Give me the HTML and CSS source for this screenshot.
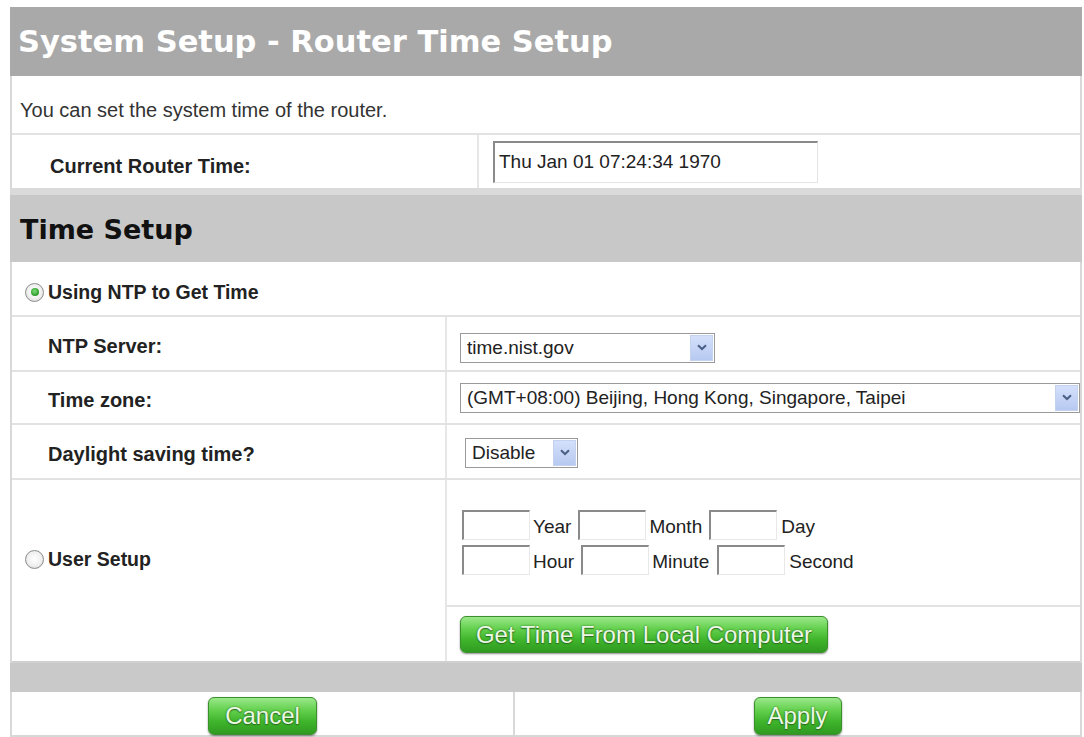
FILE: index.html
```html
<!DOCTYPE html>
<html>
<head>
<meta charset="utf-8">
<link rel="stylesheet" href="styles.css">
</head>
<body>
<div class="panel">
  <div class="title">System Setup - Router Time Setup</div>
  <div class="intro">You can set the system time of the router.</div>
  <div class="row current">
    <div class="cell label">Current Router Time:</div>
    <div class="cell value"><div class="textbox wide">Thu Jan 01 07:24:34 1970</div></div>
  </div>
  <div class="section">Time Setup</div>
  <div class="radio-row">
    <span class="radio checked"><span class="dot"></span></span>
    <span class="radio-label">Using NTP to Get Time</span>
  </div>
  <div class="row form r-ntp">
    <div class="cell label">NTP Server:</div>
    <div class="cell value pad13">
      <div class="select s-ntp"><span class="sel-text">time.nist.gov</span><span class="arrow"><svg width="10" height="7" viewBox="0 0 10 7"><path d="M1 1.2 L5 5 L9 1.2" fill="none" stroke="#4a5f86" stroke-width="2"/></svg></span></div>
    </div>
  </div>
  <div class="row form r-tz">
    <div class="cell label">Time zone:</div>
    <div class="cell value pad13">
      <div class="select s-tz"><span class="sel-text">(GMT+08:00) Beijing, Hong Kong, Singapore, Taipei</span><span class="arrow"><svg width="10" height="7" viewBox="0 0 10 7"><path d="M1 1.2 L5 5 L9 1.2" fill="none" stroke="#4a5f86" stroke-width="2"/></svg></span></div>
    </div>
  </div>
  <div class="row form r-dst">
    <div class="cell label">Daylight saving time?</div>
    <div class="cell value pad18">
      <div class="select s-dst"><span class="sel-text">Disable</span><span class="arrow"><svg width="10" height="7" viewBox="0 0 10 7"><path d="M1 1.2 L5 5 L9 1.2" fill="none" stroke="#4a5f86" stroke-width="2"/></svg></span></div>
    </div>
  </div>
  <div class="row form user">
    <div class="cell user-label">
      <span class="radio"></span>
      <span class="radio-label">User Setup</span>
    </div>
    <div class="cell user-right">
      <div class="fields">
        <div class="line"><span class="box"></span><span class="unit">Year</span><span class="box"></span><span class="unit">Month</span><span class="box"></span><span class="unit">Day</span></div>
        <div class="line"><span class="box"></span><span class="unit">Hour</span><span class="box"></span><span class="unit">Minute</span><span class="box b3"></span><span class="unit">Second</span></div>
      </div>
      <div class="btn-row">
        <span class="btn btn-get">Get Time From Local Computer</span>
      </div>
    </div>
  </div>
  <div class="band"></div>
  <div class="footer">
    <div class="fcell left"><span class="btn btn-cancel">Cancel</span></div>
    <div class="fcell right"><span class="btn btn-apply">Apply</span></div>
  </div>
</div>
</body>
</html>
```

FILE: styles.css
```css
html, body {
  margin: 0;
  padding: 0;
  background: #ffffff;
}
body {
  font-family: "Liberation Sans", Arial, sans-serif;
  color: #222;
}
.panel {
  margin: 7px 0 0 10px;
  width: 1072px;
  box-sizing: border-box;
  border-left: 2px solid #d8d8d8;
  border-right: 2px solid #d8d8d8;
  background: #fff;
}
.title {
  height: 69px;
  box-sizing: border-box;
  background: #a9a9a9;
  color: #fff;
  font-family: "DejaVu Sans", Verdana, sans-serif;
  font-weight: bold;
  font-size: 30.5px;
  line-height: 69px;
  padding-left: 8px;
  margin-left: -2px;
  margin-right: -2px;
}
.intro {
  height: 59px;
  box-sizing: border-box;
  border-bottom: 2px solid #e2e2e2;
  font-size: 20px;
  color: #333;
  display: flex;
  align-items: center;
  padding-left: 8px;
  padding-top: 12px;
}
.row {
  display: grid;
  box-sizing: border-box;
  border-bottom: 2px solid #e2e2e2;
}
.row.current {
  grid-template-columns: 465px 1fr;
  height: 53px;
  border-bottom: none;
}
.row.form {
  grid-template-columns: 433px 1fr;
}
.cell {
  display: flex;
  align-items: center;
  box-sizing: border-box;
}
.cell.label {
  font-weight: bold;
  font-size: 20px;
  padding-left: 36px;
  padding-top: 6px;
  color: #222;
}
.row.current .cell.label {
  padding-left: 38px;
  padding-top: 10px;
}
.cell.value {
  border-left: 2px solid #e6e6e6;
}
.row.current .cell.value {
  padding-left: 14px;
}
.textbox {
  box-sizing: border-box;
  height: 42px;
  border-top: 2px solid #8a8a8a;
  border-left: 2px solid #8a8a8a;
  border-right: 1px solid #e4e4e4;
  border-bottom: 1px solid #e4e4e4;
  font-size: 19px;
  padding-left: 4px;
  display: flex;
  align-items: center;
  color: #222;
}
.textbox.wide {
  width: 325px;
}
.section {
  height: 74px;
  box-sizing: border-box;
  border-top: 7px solid #dadada;
  background: #c8c8c8;
  font-family: "DejaVu Sans", Verdana, sans-serif;
  font-weight: bold;
  font-size: 27px;
  color: #111;
  display: flex;
  align-items: center;
  margin-left: -2px;
  margin-right: -2px;
  padding-left: 10px;
  padding-top: 2px;
}
.radio-row {
  height: 55px;
  box-sizing: border-box;
  border-bottom: 2px solid #e2e2e2;
  display: flex;
  align-items: center;
  padding-left: 13px;
  padding-top: 7px;
}
.radio {
  width: 17px;
  height: 17px;
  border-radius: 50%;
  border: 1px solid #8a8f8a;
  background: radial-gradient(circle at 50% 45%, #ffffff 0%, #f0f0f0 55%, #c8cac8 100%);
  display: inline-flex;
  align-items: center;
  justify-content: center;
  flex: none;
}
.radio .dot {
  width: 8px;
  height: 8px;
  border-radius: 50%;
  background: radial-gradient(circle at 45% 40%, #7fdc7a 0%, #2a9a2a 70%, #1d7a1d 100%);
}
.radio-label {
  font-weight: bold;
  font-size: 19.5px;
  margin-left: 4px;
  color: #222;
}
.r-ntp { height: 55px; }
.r-ntp .cell.value { padding-top: 8px; }
.r-tz { height: 53px; }
.r-dst { height: 55px; }
.r-dst .cell.value { padding-top: 2px; }
.pad13 { padding-left: 13px; }
.pad18 { padding-left: 18px; }
.select {
  box-sizing: border-box;
  height: 30px;
  border: 1px solid #9a9a9a;
  display: flex;
  align-items: stretch;
  background: #fff;
  font-size: 19px;
  color: #222;
}
.sel-text {
  flex: 1;
  display: flex;
  align-items: center;
  padding-left: 6px;
  white-space: nowrap;
}
.arrow {
  width: 21px;
  margin: 1px;
  background: linear-gradient(#d4e0fb, #b7c9f1);
  border: 1px solid #c4d2f0;
  display: flex;
  align-items: center;
  justify-content: center;
}
.s-ntp { width: 255px; }
.s-tz { width: 620px; }
.s-dst { width: 113px; }
.row.user {
  height: 183px;
  border-bottom: 2px solid #d0d0d0;
}
.user-label {
  padding-left: 13px;
  padding-bottom: 22px;
}
.user-right {
  border-left: 2px solid #e6e6e6;
  display: flex;
  flex-direction: column;
  align-items: stretch;
}
.fields {
  height: 127px;
  box-sizing: border-box;
  border-bottom: 2px solid #e2e2e2;
  padding: 30px 0 0 15px;
  display: flex;
  flex-direction: column;
  gap: 5px;
}
.line {
  display: flex;
  align-items: flex-end;
  height: 30px;
}
.box {
  box-sizing: border-box;
  width: 68px;
  height: 30px;
  border-top: 2px solid #8a8a8a;
  border-left: 2px solid #8a8a8a;
  border-right: 1px solid #e8e8e8;
  border-bottom: 1px solid #e8e8e8;
  flex: none;
}
.box.b3 { margin-left: 1px; }
.unit {
  font-size: 19px;
  margin: 0 7px 2px 3px;
  color: #222;
  line-height: 22px;
}
.line .unit:last-child { margin-left: 4px; }
.btn-row {
  flex: 1;
  padding: 9px 0 0 13px;
}
.btn {
  display: inline-flex;
  align-items: center;
  justify-content: center;
  box-sizing: border-box;
  height: 37px;
  border: 1px solid #3b8f2c;
  border-radius: 6px;
  background: linear-gradient(#9be88a 0%, #62cf4c 35%, #3fb52c 65%, #2f9a20 100%);
  box-shadow: 0 1px 2px rgba(0,0,0,0.45);
  color: #eaf8e4;
  font-family: "Liberation Sans", Arial, sans-serif;
  font-size: 24px;
  text-shadow: 0 0 2px #2b6b1f, 0 1px 1px #2b6b1f;
  white-space: nowrap;
}
.btn-get { width: 368px; }
.btn-cancel { width: 109px; height: 38px; }
.btn-apply { width: 88px; height: 38px; }
.band {
  height: 29px;
  background: #c9c9c9;
  margin-left: -2px;
  margin-right: -2px;
}
.footer {
  display: grid;
  grid-template-columns: 501px 1fr;
  height: 45px;
  box-sizing: border-box;
  border-bottom: 2px solid #d8d8d8;
}
.fcell {
  display: flex;
  justify-content: center;
  align-items: flex-start;
  padding-top: 5px;
  box-sizing: border-box;
}
.fcell.right {
  border-left: 2px solid #d8d8d8;
}
```
